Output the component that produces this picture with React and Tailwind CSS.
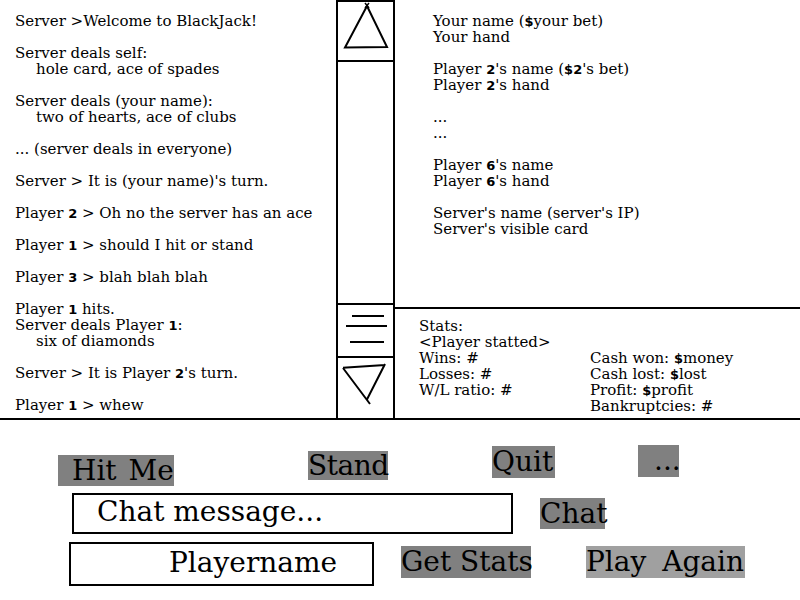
import React from "react";

const serif = "font-['DejaVu_Serif',serif]";

// digits and $ show up in a bold sans in the mockup
function T({ children }) {
  const parts = String(children).split(/([0-9$]+)/);
  return (
    <>
      {parts.map((p, i) =>
        /^[0-9$]+$/.test(p) ? (
          <span key={i} className="font-['DejaVu_Sans',sans-serif] font-bold text-[13px] leading-none">
            {p}
          </span>
        ) : (
          <React.Fragment key={i}>{p}</React.Fragment>
        )
      )}
    </>
  );
}

// lines starting with "|" are indented
const chat = [
  ["Server >Welcome to BlackJack!"],
  ["Server deals self:", "|hole card, ace of spades"],
  ["Server deals (your name):", "|two of hearts, ace of clubs"],
  ["... (server deals in everyone)"],
  ["Server > It is (your name)'s turn."],
  ["Player 2 > Oh no the server has an ace"],
  ["Player 1 > should I hit or stand"],
  ["Player 3 > blah blah blah"],
  ["Player 1 hits.", "Server deals Player 1:", "|six of diamonds"],
  ["Server > It is Player 2's turn."],
  ["Player 1 > whew"],
];

const players = [
  ["Your name ($your bet)", "Your hand"],
  ["Player 2's name ($2's bet)", "Player 2's hand"],
  ["...", "..."],
  ["Player 6's name", "Player 6's hand"],
  ["Server's name (server's IP)", "Server's visible card"],
];

function Line({ text }) {
  const indent = text.startsWith("|");
  return (
    <div className={`h-4 whitespace-pre ${indent ? "pl-[21px]" : ""}`}>
      <T>{indent ? text.slice(1) : text}</T>
    </div>
  );
}

function Block({ lines }) {
  return (
    <div>
      {lines.map((l, i) => (
        <Line key={i} text={l} />
      ))}
    </div>
  );
}

function Scrollbar() {
  return (
    <div className="w-[59px] shrink-0 flex flex-col border-x-2 border-black">
      <div className="h-[62px] border-y-2 border-black">
        <svg width="55" height="58" viewBox="0 0 55 58" fill="none" stroke="black" strokeWidth="2">
          <path d="M29 4 L7 45.5 L49 45 Z" />
          <path d="M27 1 L31 6 M31 1 L27 6" strokeWidth="1.5" />
        </svg>
      </div>
      <div className="flex-1" />
      <div className="h-[53px] border-t-2 border-black">
        <svg width="55" height="51" viewBox="0 0 55 51" fill="none" stroke="black" strokeWidth="2">
          <path d="M14 11 H46 M8 21 H49 M12 37 H46" />
        </svg>
      </div>
      <div className="h-[62px] border-t-2 border-black">
        <svg width="55" height="60" viewBox="0 0 55 60" fill="none" stroke="black" strokeWidth="2">
          <path d="M5 9.7 L47 7 M5 10 L32 46 M47 6 L28.7 42" />
        </svg>
      </div>
    </div>
  );
}

export default function App() {
  return (
    <div className={`w-[800px] h-[600px] bg-white text-black overflow-hidden ${serif}`}>
      {/* top: chat log, scrollbar, table + stats */}
      <div className="h-[420px] flex border-b-2 border-black text-[15px] leading-4">
        <div className="w-[336px] shrink-0 pl-[15px] pt-[13px] flex flex-col gap-4">
          {chat.map((b, i) => (
            <Block key={i} lines={b} />
          ))}
        </div>
        <Scrollbar />
        <div className="flex-1 flex flex-col">
          <div className="h-[309px] border-b-2 border-black pl-[38px] pt-[13px] flex flex-col gap-4">
            {players.map((b, i) => (
              <Block key={i} lines={b} />
            ))}
          </div>
          <div className="pl-[24px] pt-[9px]">
            <Line text="Stats:" />
            <Line text="<Player statted>" />
            <div className="flex">
              <div className="w-[171px]">
                <Line text="Wins: #" />
                <Line text="Losses: #" />
                <Line text="W/L ratio: #" />
              </div>
              <div>
                <Line text="Cash won: $money" />
                <Line text="Cash lost: $lost" />
                <Line text="Profit: $profit" />
                <Line text="Bankruptcies: #" />
              </div>
            </div>
          </div>
        </div>
      </div>

      {/* bottom controls */}
      <div className="text-[28px] whitespace-nowrap">
        <div className="h-[73px] flex items-start">
          <button className="ml-[58px] mt-[35px] w-[116px] h-[31px] leading-[31px] pl-[14px] text-left bg-[#808080] [word-spacing:3px]">Hit Me</button>
          <button className="ml-[134px] mt-[31px] w-[80px] h-[29px] leading-[29px] text-left bg-[#808080] tracking-[-0.5px]">Stand</button>
          <button className="ml-[104px] mt-[26px] w-[63px] h-[32px] leading-[32px] text-left bg-[#808080]">Quit</button>
          <button className="ml-[83px] mt-[25px] w-[41px] h-[32px] leading-[32px] pl-[16px] text-left bg-[#808080]">...</button>
        </div>
        <div className="h-[49px] flex items-start">
          <div className="ml-[72px] w-[441px] h-[41px] border-2 border-black pl-[23px] leading-[33px]">Chat message...</div>
          <button className="ml-[27px] mt-[5px] w-[65px] h-[31px] leading-[31px] text-left bg-[#808080]">Chat</button>
        </div>
        <div className="flex items-start">
          <div className="ml-[69px] w-[305px] h-[44px] border-2 border-black pl-[98px] leading-[38px]">Playername</div>
          <button className="ml-[27px] mt-[4px] w-[130px] h-[32px] leading-[32px] text-left bg-[#808080]">Get Stats</button>
          <button className="ml-[55px] mt-[4px] w-[159px] h-[32px] leading-[32px] text-left bg-[#a0a0a0] [word-spacing:7px]">Play Again</button>
        </div>
      </div>
    </div>
  );
}
